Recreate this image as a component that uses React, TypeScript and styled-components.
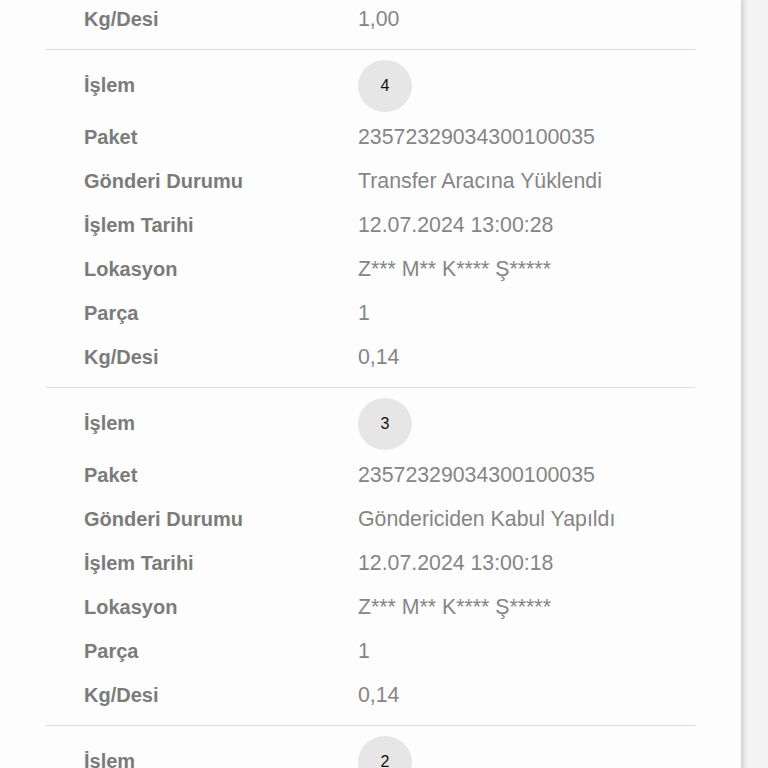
import React from "react";
import styled, { createGlobalStyle } from "styled-components";

const Global = createGlobalStyle`
  html, body { margin: 0; padding: 0; }
  body {
    background: #f4f4f4;
    font-family: "Liberation Sans", Arial, Helvetica, sans-serif;
    height: 768px;
    overflow: hidden;
  }
`;

const Page = styled.div`
  height: 768px;
  overflow: hidden;
`;

const Card = styled.div`
  width: 741px;
  min-height: 800px;
  background: #fdfdfd;
  box-shadow: 2px 0 6px rgba(0, 0, 0, 0.18);
  margin-top: -3px;
  display: flex;
  flex-direction: column;
`;

const Section = styled.div<{ $first?: boolean }>`
  margin: 0 46px;
  padding: ${(p) => (p.$first ? "0 0 8px" : "10px 0 8px")};
  border-bottom: 1px solid #dcdcdc;
  display: flex;
  flex-direction: column;
`;

const Row = styled.div<{ $head?: boolean }>`
  display: grid;
  grid-template-columns: 274px 1fr;
  align-items: center;
  height: ${(p) => (p.$head ? "55px" : "44px")};
  padding-left: 38px;
  align-content: ${(p) => (p.$head ? "start" : "center")};
`;

const Label = styled.div<{ $head?: boolean }>`
  font-size: 20px;
  font-weight: 700;
  color: #7b7b7b;
  margin-top: ${(p) => (p.$head ? "-2px" : "0")};
`;

const Value = styled.div`
  font-size: 21.3px;
  color: #858585;
  white-space: nowrap;
`;

const Badge = styled.div`
  width: 54px;
  height: 52px;
  border-radius: 50%;
  background: #e6e6e6;
  display: flex;
  align-items: center;
  justify-content: center;
  font-size: 16px;
  color: #111;
  margin-top: 0;
`;

type Entry = {
  no: number;
  paket: string;
  durum: string;
  tarih: string;
  lokasyon: string;
  parca: string;
  kg: string;
};

const entries: Entry[] = [
  {
    no: 4,
    paket: "23572329034300100035",
    durum: "Transfer Aracına Yüklendi",
    tarih: "12.07.2024 13:00:28",
    lokasyon: "Z*** M** K**** Ş*****",
    parca: "1",
    kg: "0,14",
  },
  {
    no: 3,
    paket: "23572329034300100035",
    durum: "Göndericiden Kabul Yapıldı",
    tarih: "12.07.2024 13:00:18",
    lokasyon: "Z*** M** K**** Ş*****",
    parca: "1",
    kg: "0,14",
  },
];

const Field = ({ label, value }: { label: string; value: string }) => (
  <Row>
    <Label>{label}</Label>
    <Value>{value}</Value>
  </Row>
);

export default function App() {
  return (
    <Page>
      <Global />
      <Card>
        <Section $first>
          <Field label="Kg/Desi" value="1,00" />
        </Section>
        {entries.map((e) => (
          <Section key={e.no}>
            <Row $head>
              <Label $head style={{ alignSelf: "center" }}>İşlem</Label>
              <Badge>{e.no}</Badge>
            </Row>
            <Field label="Paket" value={e.paket} />
            <Field label="Gönderi Durumu" value={e.durum} />
            <Field label="İşlem Tarihi" value={e.tarih} />
            <Field label="Lokasyon" value={e.lokasyon} />
            <Field label="Parça" value={e.parca} />
            <Field label="Kg/Desi" value={e.kg} />
          </Section>
        ))}
        <Section>
          <Row $head>
            <Label $head style={{ alignSelf: "center" }}>İşlem</Label>
            <Badge>2</Badge>
          </Row>
        </Section>
      </Card>
    </Page>
  );
}
